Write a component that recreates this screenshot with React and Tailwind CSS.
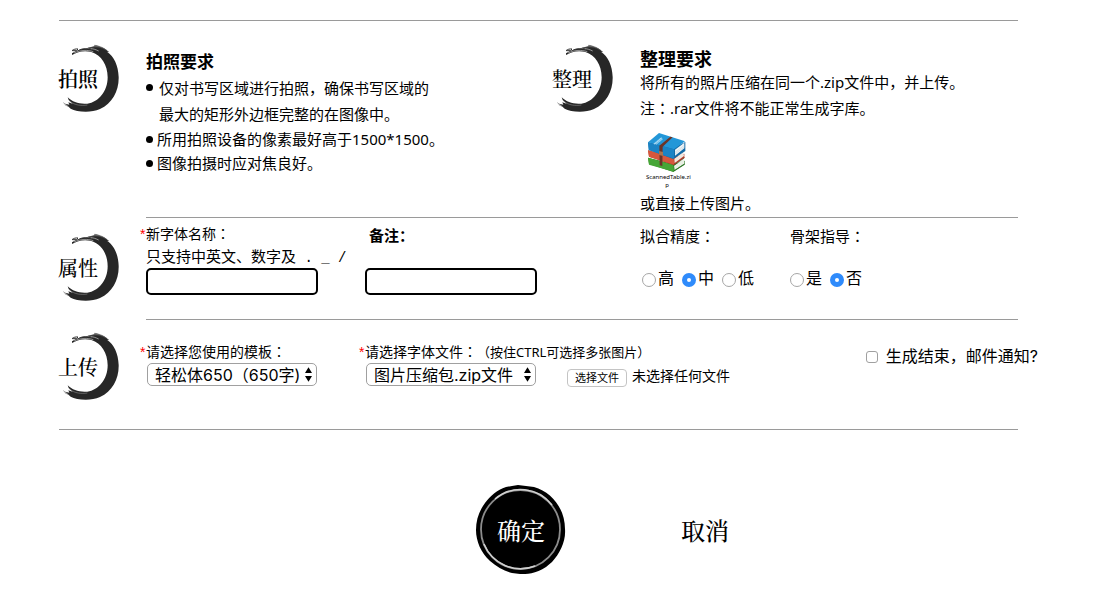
import React from "react";

const SANS = "font-['Noto_Sans','Noto_Sans_CJK_SC',sans-serif]";
const BRUSH = "font-['Noto_Serif_CJK_SC','Source_Han_Serif_SC','Noto_Sans_CJK_SC',serif]";

/* Full-width colon centred in its box. */
function Colon() {
  return <span className="font-['Noto_Sans_CJK_TC',sans-serif] leading-none">：</span>;
}

function Star() {
  return (
    <span className="-ml-1.5 inline-block w-1.5 font-['Liberation_Sans',sans-serif] leading-none text-[#ff0000]">
      *
    </span>
  );
}

function Badge({ children }) {
  return (
    <h2 className={`relative flex h-[69px] w-[62px] items-center text-xl font-medium ${BRUSH}`}>
      <svg
        className="absolute inset-0 h-full w-full"
        viewBox="24 27 186 207"
        fill="none"
        aria-hidden="true"
      >
        <path
          fill="#272727"
          d="M66 60C84 49 104 46 124 51C154 60 173 90 173 127C173 168 146 202 112 206C88 208 68 202 53 187L56 195C60 199 64 203 68 206L55 202L58 209L46 206L62 221C80 231 122 235 150 222C187 205 207 167 206 126C205 91 192 64 171 50L178 52C164 39 147 31 128 35L112 38L128 42C104 38 84 43 66 55Z"
        />
        <path stroke="#333" strokeWidth="3" d="M66 47C70 43 78 41 84 42L79 47H67M88 45C98 40 112 40 128 44" />
        <path stroke="#555" strokeWidth="2" d="M120 38C136 34 154 35 170 46M132 31C144 32 156 36 166 43M136 31L148 36" />
        <path stroke="#fff" strokeWidth="1.5" d="M72 54C92 45 112 44 130 50M122 41C130 41 138 44 146 48" />
        <path stroke="#bbb" strokeWidth="1.2" d="M58 198C74 211 94 213 112 210" />
        <path stroke="#777" strokeWidth="2" d="M40 203L48 209M44 209L54 214" />
      </svg>
      <span className="relative leading-6">{children}</span>
    </h2>
  );
}

function ArchiveIcon() {
  return (
    <svg className="h-[41px] w-[42px]" viewBox="48 36 126 123" aria-hidden="true">
      <path fill="#2f7d26" d="M54 113L57 132L130 156L164 134V122L130 132Z" />
      <path fill="#46a636" d="M54 113L130 134L132 155L57 134Z" />
      <path fill="#e9efe4" d="M132 137L161 118L163 131L134 150Z" />
      <path stroke="#276c22" strokeWidth="2" d="M131 153L165 131M131 136L163 114" />
      <path fill="#b8402d" d="M54 91L57 110L130 135L163 113V101L130 112Z" />
      <path fill="#d6573c" d="M54 91L130 112L133 134L57 110Z" />
      <path fill="#f1e7df" d="M133 116L160 97L162 108L134 129Z" />
      <path stroke="#8e2b20" strokeWidth="2" d="M131 134L164 112M131 113L163 92" />
      <path fill="#136ba7" d="M54 67L57 90L130 117L166 93V66L132 82Z" />
      <path fill="#2397d8" d="M54 67L87 39L165 64L132 88Z" />
      <path fill="#1a83c4" d="M54 67L132 88V116L56 90Z" />
      <path fill="#eef4f7" d="M135 89L163 68V85L135 107Z" />
      <path stroke="#b9cbd5" strokeWidth="1.5" d="M135 97L163 76M135 102L163 81" />
      <path fill="#6b3427" d="M88 77L121 50L128 52L98 80L97 138L89 136Z" />
      <path fill="#a9744e" d="M87 93L99 96V108L87 105Z" />
      <path stroke="#b7e0f5" strokeWidth="4" strokeDasharray="3 1" d="M72 72L95 53M77 73L97 56" />
    </svg>
  );
}

function Dot() {
  return <span className="mt-[9px] h-[7px] w-[7px] shrink-0 rounded-full bg-black" />;
}

function Radio({ name, label, checked }) {
  return (
    <label className="flex items-center gap-0.5 text-base leading-6">
      <input
        type="radio"
        name={name}
        defaultChecked={checked}
        className="mt-1 h-3.5 w-3.5 appearance-none rounded-full border border-[#a6a6a6] bg-white checked:border-[5px] checked:border-[#2f8bfb]"
      />
      {label}
    </label>
  );
}

function Select({ id, option }) {
  return (
    <div className="relative ml-px h-[23px] w-[170px]">
      <select
        id={id}
        className="block h-full w-full appearance-none rounded-[5px] border border-[#a0a0a0] bg-white pl-[7px] font-['Inter','Noto_Sans_CJK_SC',sans-serif] text-base leading-5 text-black"
      >
        <option>{option}</option>
      </select>
      <svg
        className="pointer-events-none absolute top-1 right-1 h-[15px] w-[9px]"
        viewBox="0 0 9 15"
        aria-hidden="true"
      >
        <path d="M4.500 0.300L8 6H1ZM4.500 14.700L8 9H1Z" />
      </svg>
    </div>
  );
}

const inputClass =
  "block h-[27px] w-[172px] rounded-[5px] border-2 border-black bg-white px-1.5 text-sm outline-none";

export default function App() {
  return (
    <main className={`bg-white pt-5 pr-[62px] pl-[58px] text-[15px] text-black ${SANS}`}>
      <form onSubmit={(e) => e.preventDefault()}>
        <hr className="mr-5 ml-px border-[#9a9a9a]" />

        <section className="flex">
          <div className="w-[88px] shrink-0 pt-[23px]">
            <Badge>
              <span className="font-semibold">拍照</span>
            </Badge>
          </div>
          <div className="mr-5 grid flex-1 grid-cols-[406px_88px_1fr] border-b border-[#9a9a9a]">
            <div className="pt-[29px]">
              <h3 className="text-[17px] leading-6 font-bold">拍照要求</h3>
              <ul className="mt-px leading-6">
                <li className="flex gap-1.5 leading-[26px]">
                  <Dot />
                  <span>
                    仅对书写区域进行拍照，确保书写区域的
                    <br />
                    最大的矩形外边框完整的在图像中。
                  </span>
                </li>
                <li className="flex gap-1">
                  <Dot />
                  <span>所用拍照设备的像素最好高于1500*1500。</span>
                </li>
                <li className="flex gap-1">
                  <Dot />
                  <span>图像拍摄时应对焦良好。</span>
                </li>
              </ul>
            </div>
            <div className="pt-[23px]">
              <Badge>整理</Badge>
            </div>
            <div className="pt-7 pb-0.5">
              <h3 className="text-lg leading-5 font-bold">整理要求</h3>
              <p className="leading-[26px]">
                将所有的照片压缩在同一个.zip文件中，并上传。
              </p>
              <p className="leading-[26px]">
                注<Colon />
                .rar文件将不能正常生成字库。
              </p>
              <figure className="mt-[11px] ml-1.5 w-[42px]">
                <ArchiveIcon />
                <figcaption className="text-center text-[6px] leading-2 whitespace-nowrap">
                  ScannedTable.zi
                  <br />p
                </figcaption>
              </figure>
              <p className="mt-0.5 leading-6">或直接上传图片。</p>
            </div>
          </div>
        </section>

        <section className="flex">
          <div className="w-[88px] shrink-0 pt-[15px]">
            <Badge>属性</Badge>
          </div>
          <div className="mr-5 grid flex-1 grid-cols-[219px_275px_150px_1fr] border-b border-[#9a9a9a] pt-[5px] pb-6">
            <div>
              <label htmlFor="font-name" className="block whitespace-nowrap">
                <span className="block h-[22px] text-sm leading-[22px]">
                  <Star />
                  新字体名称
                  <Colon />
                </span>
                <span className="block h-[22px] leading-[22px]">
                  只支持中英文、数字及
                  <span className="font-['Liberation_Mono',monospace] text-sm leading-none"> . _ /</span>
                </span>
              </label>
              <input id="font-name" type="text" className={`mt-px ${inputClass}`} />
            </div>
            <div>
              <label htmlFor="remark" className="ml-1 block h-6 leading-6 font-bold">
                备注：
              </label>
              <input id="remark" type="text" className={`mt-[21px] ${inputClass}`} />
            </div>
            <fieldset>
              <legend className="h-[26px] leading-[26px]">
                拟合精度
                <Colon />
              </legend>
              <div className="mt-[17px] ml-0.5 flex gap-2">
                <Radio name="precision" label="高" />
                <Radio name="precision" label="中" checked />
                <Radio name="precision" label="低" />
              </div>
            </fieldset>
            <fieldset>
              <legend className="h-[26px] leading-[26px]">
                骨架指导
                <Colon />
              </legend>
              <div className="mt-[17px] flex gap-2">
                <Radio name="skeleton" label="是" />
                <Radio name="skeleton" label="否" checked />
              </div>
            </fieldset>
          </div>
        </section>

        <section className="flex pb-7">
          <div className="w-[88px] shrink-0 pt-3">
            <Badge>上传</Badge>
          </div>
          <div className="flex flex-1 pt-[21px]">
            <div className="w-[219px]">
              <label htmlFor="template" className="block h-[22px] text-sm leading-[22px]">
                <Star />
                请选择您使用的模板
                <Colon />
              </label>
              <Select id="template" option="轻松体650（650字)" />
            </div>
            <div>
              <label
                htmlFor="file-kind"
                className="block h-[22px] text-sm leading-[22px] whitespace-nowrap [text-spacing-trim:space-all]"
              >
                <Star />
                请选择字体文件
                <Colon />
                <span className="text-[13px]">（按住CTRL可选择多张图片）</span>
              </label>
              <div className="flex gap-[31px]">
                <Select id="file-kind" option="图片压缩包.zip文件" />
                <label className="relative flex gap-[5px] text-sm leading-[26px] whitespace-nowrap">
                  <input type="file" multiple className="sr-only" />
                  <span className="mt-1.5 h-[18px] w-[60px] rounded-[4px] border border-[#c4c4c4] text-center text-[11px] leading-4">
                    选择文件
                  </span>
                  <span>未选择任何文件</span>
                </label>
              </div>
            </div>
            <label className="mt-[3px] ml-auto flex h-6 items-center gap-2 font-['Inter','Noto_Sans_CJK_SC',sans-serif] text-base whitespace-nowrap">
              <input
                type="checkbox"
                className="mt-0.5 h-3 w-3 appearance-none rounded-[3px] border border-[#a0a0a0] bg-white checked:bg-[#2f8bfb]"
              />
              生成结束，邮件通知?
            </label>
          </div>
        </section>

        <hr className="mr-5 ml-px border-[#9a9a9a]" />

        <div className={`flex items-center gap-[115px] pt-[55px] pb-4 pl-[418px] text-2xl font-medium ${BRUSH}`}>
          <button
            type="submit"
            className="relative flex h-[90px] w-[90px] items-center justify-center text-white"
          >
            <svg className="absolute inset-0 h-full w-full" viewBox="0 0 90 90" fill="none" aria-hidden="true">
              <path
                fill="#000"
                d="M30 2L36 1L42 0L50 1L58 2C76 7 89 24 89 44C90 56 84 68 76 77L70 82C60 89 50 89 44 89L36 88C28 86 21 82 14 76C5 68 0 56 0 45C0 35 3 26 9 18C14 11 21 5 30 2Z"
              />
              <circle cx="44.500" cy="44.500" r="39.500" stroke="#8c8c8c" strokeWidth="1.800" />
              <path stroke="#d0d0d0" strokeWidth="1.500" d="M19 14A39.500 39.500 0 0 1 76 20M8 59A39.500 39.500 0 0 0 59 81" />
            </svg>
            <span className="relative">确定</span>
          </button>
          <button type="button">取消</button>
        </div>
      </form>
    </main>
  );
}
